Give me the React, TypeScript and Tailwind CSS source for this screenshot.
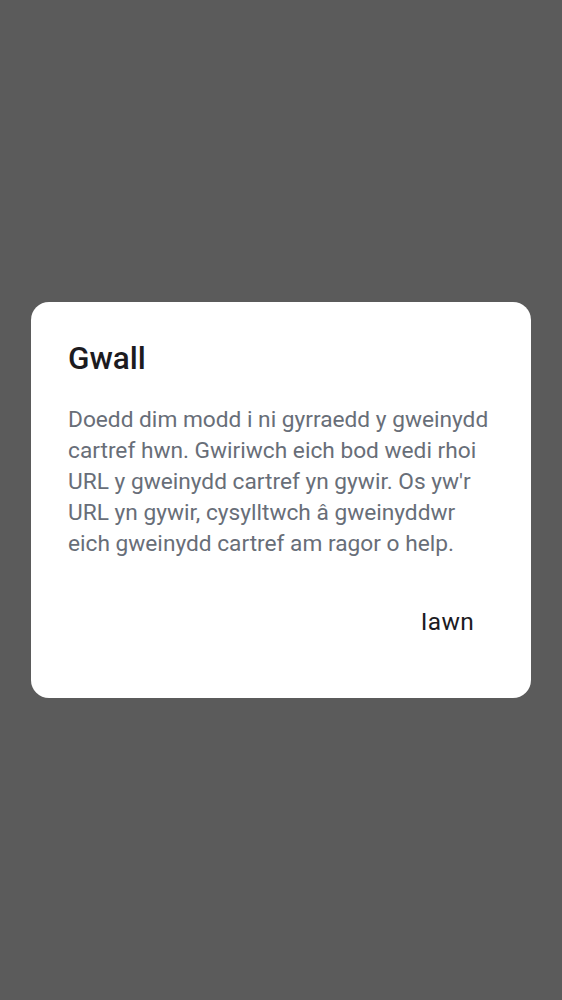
import React from "react";

export default function App() {
  return (
    <div
      className="w-full h-[1000px] bg-[#5b5b5b] flex items-center justify-center"
      style={{ fontFamily: "Roboto, 'Noto Sans', sans-serif" }}
    >
      <div className="w-[500px] bg-white rounded-[18px] pt-[37px] pb-[60px] pl-[37px] pr-[37px] flex flex-col">
        <h1 className="text-[31.5px] leading-[40px] text-[#1c1b1f] font-medium">Gwall</h1>
        <p className="mt-[25px] text-[22.7px] leading-[31px] text-[#686e78]">
          Doedd dim modd i ni gyrraedd y gweinydd cartref hwn. Gwiriwch eich bod wedi rhoi URL y gweinydd cartref yn gywir. Os yw'r URL yn gywir, cysylltwch â gweinyddwr eich gweinydd cartref am ragor o help.
        </p>
        <div className="mt-[47px] flex justify-end pr-[20px]">
          <button className="text-[24.5px] leading-[32px] text-[#1c1b1f] font-normal tracking-[0.3px]">Iawn</button>
        </div>
      </div>
    </div>
  );
}
